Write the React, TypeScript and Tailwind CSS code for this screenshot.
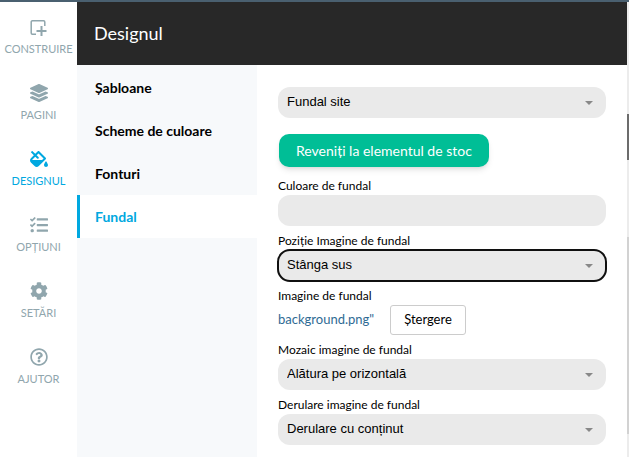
import type { ReactNode } from 'react'
import clsx from 'clsx'
import { FaCog, FaFillDrip, FaLayerGroup, FaRegQuestionCircle, FaTasks } from 'react-icons/fa'

const BuildIcon = () => (
  <svg width="18" height="18" viewBox="0 0 18 18" fill="none" stroke="currentColor" strokeWidth="1.5">
    <path d="M6 16.2H2.4A1.2 1.2 0 0 1 1.2 15V4A1.2 1.2 0 0 1 2.4 2.8h11.2A1.2 1.2 0 0 1 14.8 4v4" />
    <path d="M11.5 8v10M6.5 13h10" strokeWidth="2" />
  </svg>
)

const mainItems = [
  { label: 'CONSTRUIRE', icon: <BuildIcon /> },
  { label: 'PAGINI', icon: <FaLayerGroup size={18} /> },
  { label: 'DESIGNUL', icon: <FaFillDrip size={18} />, active: true },
  { label: 'OPȚIUNI', icon: <FaTasks size={18} /> },
  { label: 'SETĂRI', icon: <FaCog size={18} /> },
  { label: 'AJUTOR', icon: <FaRegQuestionCircle size={18} /> },
]

const designItems = [
  { label: 'Șabloane' },
  { label: 'Scheme de culoare' },
  { label: 'Fonturi' },
  { label: 'Fundal', active: true },
]

interface SelectProps {
  id: string
  options: string[]
  label?: string
  focused?: boolean
}

function Select({ id, options, label, focused }: SelectProps) {
  return (
    <div className="relative">
      <select
        id={id}
        aria-label={label}
        className={clsx(
          'block h-[31px] w-full appearance-none rounded-xl bg-[#eaeaea] pr-8 pb-px pl-[9px] font-["Liberation_Sans",Arial,sans-serif] text-[13px] text-black',
          focused && 'outline-2 -outline-offset-1 outline-[#101010]'
        )}
      >
        {options.map((o) => (
          <option key={o}>{o}</option>
        ))}
      </select>
      <svg
        className="pointer-events-none absolute top-1/2 right-[13px] -translate-y-1/2 text-[#888]"
        width="8"
        height="4"
        viewBox="0 0 8 4"
        fill="currentColor"
      >
        <path d="M0 0h8L4 4z" />
      </svg>
    </div>
  )
}

function Field({ id, label, children }: { id: string; label: string; children: ReactNode }) {
  return (
    <div>
      <label htmlFor={id} className="block text-xs leading-[18px]">
        {label}
      </label>
      {children}
    </div>
  )
}

export default function App() {
  return (
    <div className='flex min-h-screen flex-col border-t-2 border-[#4a6070] bg-white font-["Lato",sans-serif] text-black'>
      <div className="flex grow">
        <nav className="flex w-[77px] shrink-0 flex-col gap-[26px] pt-4">
          {mainItems.map((item) => (
            <a
              key={item.label}
              href="#"
              className={clsx(
                'flex flex-col items-center gap-1 text-[11px] leading-[18px]',
                item.active ? 'text-[#00a8e0]' : 'text-[#90a6ad]'
              )}
            >
              {item.icon}
              {item.label}
            </a>
          ))}
        </nav>

        <div className="flex min-w-0 grow flex-col">
          <header className="flex h-[63px] items-center bg-[#282828] pb-px pl-[17px]">
            <h1 className="text-lg text-white">Designul</h1>
          </header>
          <div className="flex grow">
            <nav className="w-[180px] shrink-0 bg-[#f7f9fb] pt-px">
              {designItems.map((item) => (
                <a
                  key={item.label}
                  href="#"
                  className={clsx(
                    'flex h-[43px] items-center border-l-3 pl-[15px] text-sm font-bold',
                    item.active ? 'border-[#00a8e0] bg-white text-[#00a8e0]' : 'border-transparent'
                  )}
                >
                  {item.label}
                </a>
              ))}
            </nav>

            <form className="grow px-[21px] pt-[22px] pb-3">
              <Select id="target" label="Fundal" options={['Fundal site']} />
              <button
                type="button"
                className="mt-4 ml-px block h-[33px] rounded-[10px] bg-[#00be96] px-[17px] text-sm text-white shadow-md"
              >
                Reveniți la elementul de stoc
              </button>
              <div className="mt-[10px] flex flex-col gap-[6px]">
                <Field id="color" label="Culoare de fundal">
                  <input id="color" type="text" className="block h-[31px] w-full rounded-xl bg-[#eaeaea] px-[9px] text-[13px]" />
                </Field>
                <Field id="position" label="Poziție Imagine de fundal">
                  <Select id="position" options={['Stânga sus']} focused />
                </Field>
                <Field id="remove" label="Imagine de fundal">
                  <div className="flex items-center gap-4">
                    <a href="#" className="text-[13px] text-[#2f6b94]">
                      background.png"
                    </a>
                    <button
                      id="remove"
                      type="button"
                      className="h-[30px] rounded-[3px] border border-[#ccc] bg-white px-[13px] text-[13px]"
                    >
                      Ștergere
                    </button>
                  </div>
                </Field>
                <Field id="tile" label="Mozaic imagine de fundal">
                  <Select id="tile" options={['Alătura pe orizontală']} />
                </Field>
                <Field id="scroll" label="Derulare imagine de fundal">
                  <Select id="scroll" options={['Derulare cu conținut']} />
                </Field>
              </div>
            </form>
          </div>
        </div>

        <div className="flex w-[2px] shrink-0 flex-col bg-[#ececec]">
          <div className="mt-28 h-[46px] bg-[#6c6c6c]" />
          <div className="mt-[77px] h-[197px] bg-[#d2d2d2]" />
        </div>
      </div>
    </div>
  )
}
